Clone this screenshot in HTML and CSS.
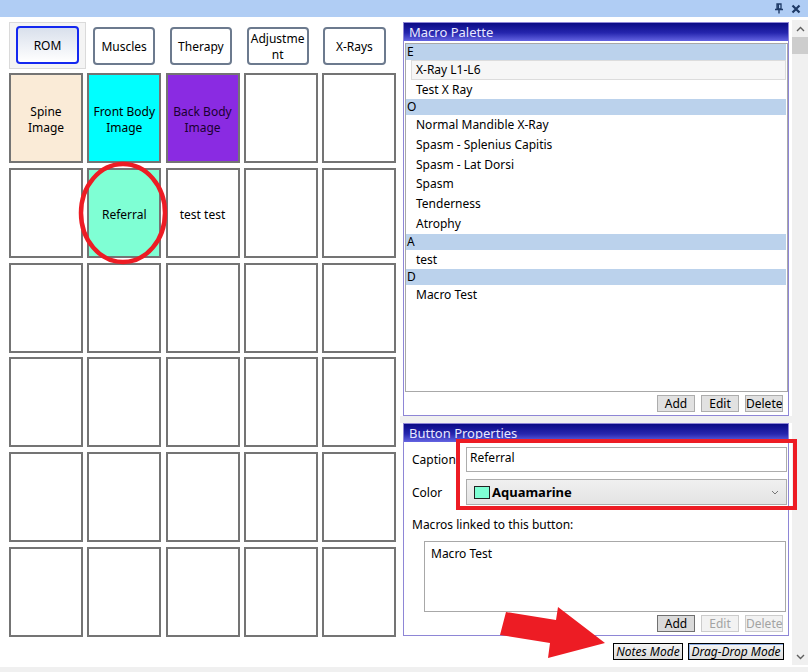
FILE: index.html
```html
<!DOCTYPE html>
<html lang="en">
<head>
  <meta charset="UTF-8">
  <meta name="viewport" content="width=device-width, initial-scale=1.0">
  <title>Button Designer</title>
  <link rel="stylesheet" href="styles.css">
</head>
<body>
  <!-- Docked window caption -->
  <div class="topbar">
    <svg class="pin" width="10" height="11" viewBox="0 0 10 11">
      <path d="M3 1 H7 V6 H3 Z M4.4 1 V6" fill="none" stroke="#1e3a66" stroke-width="1.3"/>
      <path d="M1 6.5 H9 M5 6.5 V10.5" fill="none" stroke="#1e3a66" stroke-width="1.4"/>
    </svg>
    <svg class="close" width="10" height="10" viewBox="0 0 10 10">
      <path d="M1.5 1.5 L8.5 8.5 M8.5 1.5 L1.5 8.5" stroke="#1e3a66" stroke-width="2.2"/>
    </svg>
  </div>

  <div class="main">
    <!-- Button layout -->
    <div class="left">
      <div class="tabs">
        <div class="tab-sel"><div class="tab active">ROM</div></div>
        <div class="tab">Muscles</div>
        <div class="tab">Therapy</div>
        <div class="tab">Adjustme<br>nt</div>
        <div class="tab">X-Rays</div>
      </div>

      <div class="grid">
        <div class="cell spine">Spine<br>Image</div>
        <div class="cell front">Front Body<br>Image</div>
        <div class="cell back">Back Body<br>Image</div>
        <div class="cell"></div>
        <div class="cell"></div>

        <div class="cell"></div>
        <div class="cell referral">Referral</div>
        <div class="cell">test test</div>
        <div class="cell"></div>
        <div class="cell"></div>

        <div class="cell"></div>
        <div class="cell"></div>
        <div class="cell"></div>
        <div class="cell"></div>
        <div class="cell"></div>

        <div class="cell"></div>
        <div class="cell"></div>
        <div class="cell"></div>
        <div class="cell"></div>
        <div class="cell"></div>

        <div class="cell"></div>
        <div class="cell"></div>
        <div class="cell"></div>
        <div class="cell"></div>
        <div class="cell"></div>

        <div class="cell"></div>
        <div class="cell"></div>
        <div class="cell"></div>
        <div class="cell"></div>
        <div class="cell"></div>
      </div>
    </div>

    <!-- Palette and properties -->
    <div class="right">
      <div class="panel palette">
        <div class="panel-head">Macro Palette</div>
        <div class="listbox">
          <div class="group">E</div>
          <div class="item sel">X-Ray L1-L6</div>
          <div class="item">Test X Ray</div>
          <div class="group">O</div>
          <div class="item">Normal Mandible X-Ray</div>
          <div class="item">Spasm - Splenius Capitis</div>
          <div class="item">Spasm - Lat Dorsi</div>
          <div class="item">Spasm</div>
          <div class="item">Tenderness</div>
          <div class="item">Atrophy</div>
          <div class="group">A</div>
          <div class="item">test</div>
          <div class="group">D</div>
          <div class="item">Macro Test</div>
        </div>
        <div class="btn-row">
          <button class="btn">Add</button>
          <button class="btn">Edit</button>
          <button class="btn">Delete</button>
        </div>
      </div>

      <div class="splitter"></div>

      <div class="panel props">
        <div class="panel-head">Button Properties</div>
        <div class="field-row caption-row">
          <span class="field-label">Caption</span>
          <div class="text-input">Referral</div>
        </div>
        <div class="field-row color-row">
          <span class="field-label">Color</span>
          <div class="dropdown">
            <span class="swatch"></span>
            <span class="color-name">Aquamarine</span>
            <svg class="chev" width="8" height="5" viewBox="0 0 8 5">
              <path d="M1 1 L4 4 L7 1" fill="none" stroke="#777" stroke-width="1"/>
            </svg>
          </div>
        </div>
        <div class="linked-label">Macros linked to this button:</div>
        <div class="linked-list">Macro Test</div>
        <div class="btn-row">
          <button class="btn pressed">Add</button>
          <button class="btn disabled">Edit</button>
          <button class="btn disabled">Delete</button>
        </div>
      </div>

      <div class="modes">
        <button class="mode notes">Notes Mode</button>
        <button class="mode drag">Drag-Drop Mode</button>
      </div>
    </div>

    <!-- Vertical scrollbar -->
    <div class="vscroll">
      <div class="arrow">
        <svg width="9" height="6" viewBox="0 0 9 6"><path d="M1 5 L4.5 1.5 L8 5" fill="none" stroke="#606060" stroke-width="1.4"/></svg>
      </div>
      <div class="thumb"></div>
      <div class="track"></div>
      <div class="arrow">
        <svg width="9" height="6" viewBox="0 0 9 6"><path d="M1 1 L4.5 4.5 L8 1" fill="none" stroke="#606060" stroke-width="1.4"/></svg>
      </div>
    </div>
  </div>

  <div class="bottombar"></div>

  <!-- Red markup drawn over the screenshot -->
  <svg class="markup" width="808" height="672" viewBox="0 0 808 672">
    <ellipse cx="123" cy="213" rx="42" ry="49" fill="none" stroke="#ed1c24" stroke-width="4.5"/>
    <rect x="458" y="441" width="337" height="67" fill="none" stroke="#ed1c24" stroke-width="4"/>
    <polygon points="506,612 556,620 558,607 605,643 548,658 550,643 500,635" fill="#ed1c24"/>
  </svg>
</body>
</html>
```

FILE: styles.css
```css
body {
  margin: 0;
  padding: 0;
  width: 808px;
  height: 672px;
  position: relative;
  overflow: hidden;
  background: #fff;
  font-family: "Noto Sans", "Open Sans", sans-serif;
  font-size: 12px;
  color: #000;
}
.topbar {
  height: 17px;
  background: #b0cdf4;
  display: flex;
  justify-content: flex-end;
  align-items: center;
  gap: 7px;
  padding-right: 7px;
}
.main {
  display: flex;
  height: 650px;
}
.left {
  width: 400px;
  padding: 5px 0 0 9px;
  box-sizing: border-box;
}
.tabs {
  display: flex;
  align-items: center;
  height: 47px;
}
.tab-sel {
  padding: 3px 6px 4px;
  background: #f4f4f4;
  border: 1px solid #dadada;
  margin-right: 7px;
}
.tab {
  width: 63px;
  height: 38px;
  box-sizing: border-box;
  border: 2px solid #6c7a8e;
  border-radius: 4px;
  background: #fff;
  display: flex;
  align-items: center;
  justify-content: center;
  text-align: center;
  line-height: 16px;
  padding-top: 2px;
  margin-right: 14.5px;
}
.tab-sel .tab {
  margin-right: 0;
}
.tab.active {
  border-color: #1428f0;
  background: linear-gradient(#d9e0ec, #fff);
}
.grid {
  margin-top: 4px;
  display: grid;
  grid-template-columns: repeat(5, 74px);
  grid-auto-rows: 90px;
  column-gap: 4.25px;
  row-gap: 4.8px;
}
.cell {
  border: 2px solid #747474;
  box-sizing: border-box;
  display: flex;
  align-items: center;
  justify-content: center;
  text-align: center;
  line-height: 16px;
  padding-top: 4px;
}
.cell.spine { background: #faebd7; }
.cell.front { background: #00ffff; }
.cell.back { background: #8a2be2; color: #1a0030; }
.cell.referral { background: #7fffd4; }

.right {
  width: 392px;
  padding-top: 5px;
  box-sizing: border-box;
}
.panel {
  margin-left: 3px;
  width: 386px;
  border: 1px solid #8e86d6;
  background: #fff;
  box-sizing: border-box;
}
.panel-head {
  height: 18px;
  line-height: 18px;
  padding-left: 5px;
  font-size: 13px;
  color: #e8e8ff;
  background: linear-gradient(#0a0a86, #2626ae 55%, #6464e2);
}
.palette .listbox {
  margin: 2px 0 0 1px;
  height: 349px;
  border: 1px solid #a8a8a8;
  box-sizing: border-box;
}
.group {
  height: 16px;
  line-height: 16px;
  background: #bbd2ec;
  padding-left: 1px;
  margin-right: 1px;
}
.item {
  height: 19.7px;
  line-height: 19.7px;
  padding-left: 10px;
  box-sizing: border-box;
}
.item.sel {
  margin-left: 5px;
  margin-right: 1px;
  padding-left: 4px;
  line-height: 17.7px;
  background: #f6f6f6;
  border: 1px solid #dcdcdc;
}
.btn-row {
  display: flex;
  justify-content: flex-end;
  gap: 6px;
  padding: 3px 5px 3px 0;
}
.btn {
  width: 38px;
  height: 17px;
  padding: 0;
  border: 1px solid #adadad;
  background: #e1e1e1;
  font-family: inherit;
  font-size: 12px;
  line-height: 15px;
  color: #000;
  text-align: center;
}
.btn.pressed {
  background: #dadada;
  border-color: #707070;
}
.btn.disabled {
  background: #f2f2f2;
  border-color: #cccccc;
  color: #a3a3a3;
}
.splitter {
  height: 7px;
  background: #f0f0f0;
}
.field-row {
  display: flex;
  align-items: center;
  padding: 0 1px 0 8px;
}
.caption-row {
  margin-top: 5px;
}
.color-row {
  margin-top: 7px;
}
.field-label {
  width: 54px;
}
.text-input {
  flex: 1;
  height: 25px;
  box-sizing: border-box;
  border: 1px solid #adadad;
  padding: 2px 3px;
  line-height: 16px;
}
.dropdown {
  flex: 1;
  height: 26px;
  box-sizing: border-box;
  border: 1px solid #acacac;
  background: linear-gradient(#f0f0f0, #e4e4e4);
  display: flex;
  align-items: center;
  padding-left: 7px;
}
.swatch {
  width: 14px;
  height: 11px;
  border: 1px solid #222;
  background: #7fffd4;
  margin-right: 2px;
}
.color-name {
  font-weight: bold;
  font-size: 13px;
}
.chev {
  margin-left: auto;
  margin-right: 7px;
}
.linked-label {
  margin-top: 12px;
  padding-left: 8px;
  line-height: 16px;
}
.linked-list {
  margin: 8px 2px 0 20px;
  height: 71px;
  box-sizing: border-box;
  border: 1px solid #a8a8a8;
  padding: 4px 6px;
  line-height: 16px;
}
.modes {
  margin-top: 7px;
  display: flex;
  justify-content: flex-end;
  gap: 5px;
  padding-right: 8px;
}
.mode {
  height: 17px;
  padding: 0;
  border: 1px solid #000;
  background: linear-gradient(#f4f4f4, #dcdcdc);
  font-family: inherit;
  font-size: 12px;
  font-style: italic;
  line-height: 15px;
  color: #000;
}
.mode.notes { width: 70px; }
.mode.drag {
  width: 96px;
  box-shadow: inset 1px 1px 0 #8fb0e6;
}
.vscroll {
  width: 16px;
  margin-top: 3px;
  height: 645px;
  background: #f0f0f0;
  display: flex;
  flex-direction: column;
}
.vscroll .arrow {
  height: 17px;
  display: flex;
  align-items: center;
  justify-content: center;
}
.vscroll .thumb {
  height: 17px;
  background: #cdcdcd;
}
.vscroll .track {
  flex: 1;
}
.bottombar {
  height: 5px;
  background: #f0f0f0;
}
.markup {
  position: absolute;
  top: 0;
  left: 0;
  pointer-events: none;
}
```
